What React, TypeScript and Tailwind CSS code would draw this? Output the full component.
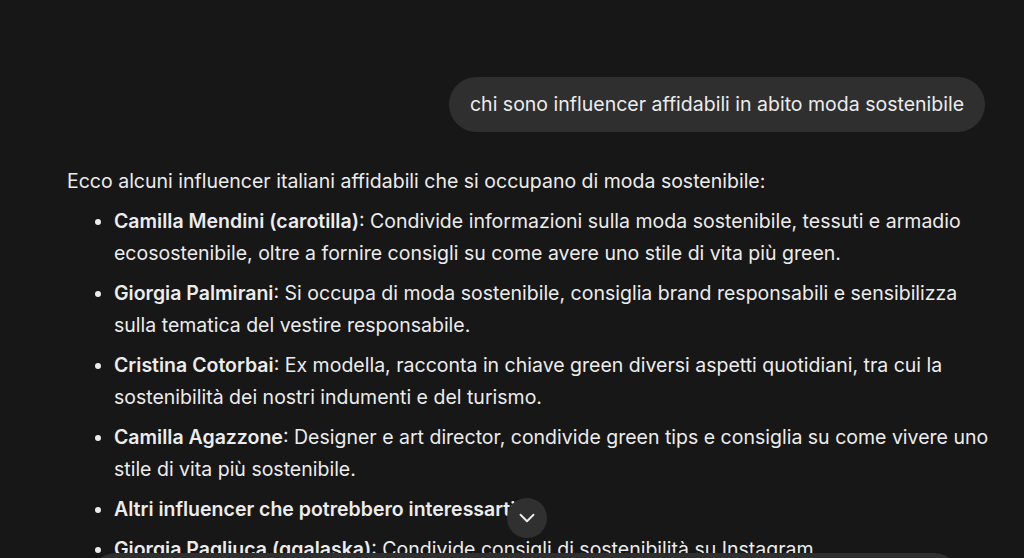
import { ChevronDown } from "lucide-react";

const items = [
  {
    name: "Camilla Mendini (carotilla)",
    text: "Condivide informazioni sulla moda sostenibile, tessuti e armadio ecosostenibile, oltre a fornire consigli su come avere uno stile di vita più green.",
  },
  {
    name: "Giorgia Palmirani",
    text: "Si occupa di moda sostenibile, consiglia brand responsabili e sensibilizza sulla tematica del vestire responsabile.",
  },
  {
    name: "Cristina Cotorbai",
    text: "Ex modella, racconta in chiave green diversi aspetti quotidiani, tra cui la sostenibilità dei nostri indumenti e del turismo.",
  },
  {
    name: "Camilla Agazzone",
    text: "Designer e art director, condivide green tips e consiglia su come vivere uno stile di vita più sostenibile.",
  },
];

export default function App() {
  return (
    <div className="relative w-[1024px] h-[558px] overflow-hidden bg-[#171717] text-[#ececec] font-['Inter',sans-serif]">
      <div className="pl-[67px] pr-[30px] pt-[77px]">
        <div className="flex justify-end mr-[9px]">
          <div className="rounded-full bg-[#2f2f2f] px-[21px] py-[14px] text-[19.5px] leading-[27px]">
            chi sono influencer affidabili in abito moda sostenibile
          </div>
        </div>

        <div className="mt-[33px] text-[19.5px] leading-[32px]">
          <p className="mb-2">Ecco alcuni influencer italiani affidabili che si occupano di moda sostenibile:</p>
          <ul className="list-disc pl-[47px] flex flex-col gap-2 marker:text-[#ececec]">
            {items.map((item) => (
              <li key={item.name}>
                <span className="font-semibold">{item.name}</span>: {item.text}
              </li>
            ))}
            <li>
              <span className="font-semibold">Altri influencer che potrebbero interessarti:</span>
            </li>
            <li>
              <span className="font-semibold">Giorgia Pagliuca (ggalaska)</span>: Condivide consigli di sostenibilità su Instagram.
            </li>
          </ul>
        </div>
      </div>

      <button className="absolute left-[507px] top-[498px] w-10 h-10 rounded-full bg-[#303030] flex items-center justify-center text-[#ececec]">
        <ChevronDown size={26} strokeWidth={1.75} />
      </button>

      <div className="absolute left-[90px] right-[64px] top-[553px] h-[60px] rounded-t-[26px] bg-[#2f2f2f]" />
    </div>
  );
}
